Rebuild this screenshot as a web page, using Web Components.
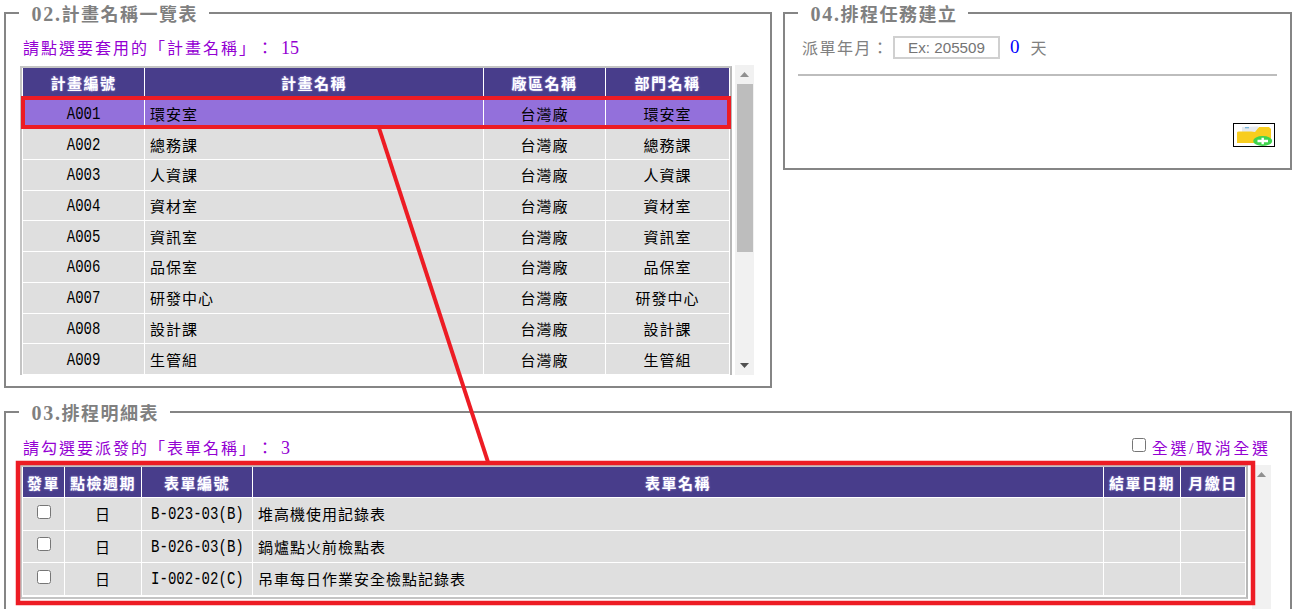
<!DOCTYPE html>
<html lang="zh-Hant">
<head>
<meta charset="utf-8">
<title>排程任務</title>
<style>
  html, body { margin: 0; height: 100%; overflow: hidden; background: #fff; }
</style>
</head>
<body>
<fx-app></fx-app>

<script>
const FONT_STACK = `"Liberation Serif", "Noto Sans CJK TC", serif`;

const PLAN_COLUMNS = [
  { title: "計畫編號", width: 121, align: "center" },
  { title: "計畫名稱", width: 338, align: "left" },
  { title: "廠區名稱", width: 121, align: "center" },
  { title: "部門名稱", width: 123, align: "center" }
];

const PLAN_ROWS = [
  ["A001", "環安室", "台灣廠", "環安室"],
  ["A002", "總務課", "台灣廠", "總務課"],
  ["A003", "人資課", "台灣廠", "人資課"],
  ["A004", "資材室", "台灣廠", "資材室"],
  ["A005", "資訊室", "台灣廠", "資訊室"],
  ["A006", "品保室", "台灣廠", "品保室"],
  ["A007", "研發中心", "台灣廠", "研發中心"],
  ["A008", "設計課", "台灣廠", "設計課"],
  ["A009", "生管組", "台灣廠", "生管組"]
];

const FORM_COLUMNS = [
  { title: "發單", width: 41, align: "center", check: true },
  { title: "點檢週期", width: 76, align: "center" },
  { title: "表單編號", width: 110, align: "center" },
  { title: "表單名稱", width: 850, align: "left" },
  { title: "結單日期", width: 76, align: "center" },
  { title: "月繳日", width: 64, align: "center" }
];

const FORM_ROWS = [
  ["", "日", "B-023-03(B)", "堆高機使用記錄表", "", ""],
  ["", "日", "B-026-03(B)", "鍋爐點火前檢點表", "", ""],
  ["", "日", "I-002-02(C)", "吊車每日作業安全檢點記錄表", "", ""]
];

class FxPanel extends HTMLElement {
  constructor() {
    super();
    this.attachShadow({ mode: "open" });
  }

  connectedCallback() {
    const num = this.getAttribute("num");
    const title = this.getAttribute("title");
    this.removeAttribute("title");
    this.shadowRoot.innerHTML = /* html */`
    <style>
      :host { display: block; font-family: ${FONT_STACK}; }
      fieldset {
        box-sizing: border-box;
        height: 100%;
        margin: 0;
        padding: 0;
        min-width: 0;
        border: 2px solid #858585;
      }
      legend {
        margin-left: 13px;
        padding: 0 10.5px 0 12.5px;
        height: 22px;
        line-height: 24px;
        font-size: 18px;
        font-weight: bold;
        letter-spacing: 1.5px;
        color: #808080;
      }
      .num { font-size: 20px; letter-spacing: 1.7px; }
    </style>
    <fieldset>
      <legend><span class="num">${num}.</span>${title}</legend>
      <slot></slot>
    </fieldset>`;
  }
}

class FxScrollbar extends HTMLElement {
  constructor() {
    super();
    this.attachShadow({ mode: "open" });
  }

  connectedCallback() {
    const thumb = this.hasAttribute("thumb");
    const down = this.hasAttribute("down");
    this.shadowRoot.innerHTML = /* html */`
    <style>
      :host {
        display: flex;
        flex-direction: column;
        align-items: center;
        flex: none;
        width: 19px;
        height: 100%;
        background: #f1f1f1;
      }
      .arrow { flex: none; height: 19px; width: 100%; display: flex; align-items: center; justify-content: center; }
      .thumb { width: 16px; height: 168px; background: #bdbdbd; }
      .space { flex: 1; }
      svg { display: block; }
    </style>
    <div class="arrow"><svg width="9" height="5" viewBox="0 0 9 5"><path d="M4.5 0 9 5H0z" fill="#8f8f8f"/></svg></div>
    ${thumb ? `<div class="thumb"></div>` : ""}
    <div class="space"></div>
    ${down ? `<div class="arrow"><svg width="9" height="5" viewBox="0 0 9 5"><path d="M0 0h9L4.500 5z" fill="#505050"/></svg></div>` : ""}`;
  }
}

class FxGrid extends HTMLElement {
  constructor() {
    super();
    this.attachShadow({ mode: "open" });
  }

  set data({ columns, rows, selected = -1, rowHeight, headHeight }) {
    const widths = columns.map(col => `${col.width}px`).join(" ");
    const head = columns.map(col => `<div class="th">${col.title}</div>`).join("");
    const body = rows.map((row, r) => row.map((value, c) => {
      const col = columns[c];
      let inner = value;
      if (col.check) inner = `<input type="checkbox">`;
      else if (/^[\x21-\x7e]+$/.test(value)) inner = `<span class="code">${value}</span>`;
      return `<div class="td ${col.align} ${r === selected ? "sel" : ""}">${inner}</div>`;
    }).join("")).join("");

    this.shadowRoot.innerHTML = /* html */`
    <style>
      :host {
        display: block;
        box-sizing: border-box;
        flex: none;
        overflow: hidden;
        font-family: ${FONT_STACK};
        font-size: 15px;
        letter-spacing: 1px;
        color: #000;
      }
      .table {
        display: grid;
        grid-template-columns: ${widths};
        grid-template-rows: ${headHeight}px;
        grid-auto-rows: ${rowHeight}px;
        gap: 1px;
        padding: 0 1px 2px;
        width: max-content;
        border: 2px solid #c4c4c4;
        border-right-color: #b8b8b8;
        background: #fff;
      }
      .th {
        display: flex;
        align-items: center;
        justify-content: center;
        background: #483d8b;
        color: #fff;
        font-weight: bold;
        letter-spacing: 1.5px;
        text-shadow: 0 0 2px #a79fe6;
      }
      .td {
        display: flex;
        align-items: center;
        background: #dfdfdf;
        white-space: nowrap;
      }
      .td.sel { background: #9370db; }
      .td.center { justify-content: center; }
      .td.left { padding-left: 5px; }
      /* half width latin, the source font is a narrow mono one */
      .code {
        flex: none;
        padding-top: 1px;
        font-family: "Liberation Mono", monospace;
        font-size: 18px;
        letter-spacing: 0;
        transform: scaleX(.78);
      }
      input { width: 14px; height: 14px; margin: 0 0 4px; }
    </style>
    <div class="table">${head}${body}</div>`;
  }
}

class FxPlanList extends HTMLElement {
  constructor() {
    super();
    this.attachShadow({ mode: "open" });
  }

  connectedCallback() {
    this.shadowRoot.innerHTML = /* html */`
    <style>
      :host { display: block; padding: 12px 0 0 14px; }
      .prompt {
        height: 24px;
        line-height: 24px;
        margin: 0 0 5px 3px;
        font-size: 16px;
        letter-spacing: 2px;
        color: #9400d3;
      }
      .count { font-size: 18px; letter-spacing: 0; }
      .scroller { display: flex; gap: 3px; height: 310px; }
      fx-grid { margin-top: 1px; height: 309px; }
    </style>
    <div class="prompt">請點選要套用的「計畫名稱」： <span class="count">15</span></div>
    <div class="scroller">
      <fx-grid></fx-grid>
      <fx-scrollbar thumb down></fx-scrollbar>
    </div>`;
    this.shadowRoot.querySelector("fx-grid").data = {
      columns: PLAN_COLUMNS,
      rows: PLAN_ROWS,
      selected: 0,
      headHeight: 29.7,
      rowHeight: 29.7
    };
  }
}

class FxTaskForm extends HTMLElement {
  constructor() {
    super();
    this.attachShadow({ mode: "open" });
  }

  connectedCallback() {
    this.shadowRoot.innerHTML = /* html */`
    <style>
      :host { display: block; padding: 11px 13px 0; }
      .line {
        display: flex;
        align-items: center;
        height: 24px;
        padding-left: 4px;
        font-size: 16px;
        letter-spacing: 1.5px;
        color: #808080;
      }
      input {
        box-sizing: border-box;
        width: 107px;
        height: 23px;
        margin: 0 10px 0 3.5px;
        padding: 0;
        border: 2px solid #d0d0d0;
        font: 15.2px "Liberation Sans", sans-serif;
        text-align: center;
        outline: 0;
      }
      .days { color: #0000ff; font-size: 19px; letter-spacing: 0; margin-right: 11px; }
      hr { height: 2px; margin: 15px 0 0; border: 0; background: #bdbdbd; }
      .actions { display: flex; justify-content: flex-end; padding: 47px 2px 0 0; }
      button {
        display: block;
        box-sizing: border-box;
        width: 42px;
        height: 24px;
        padding: 0;
        border: 1px solid #000;
        background: #fff;
      }
      svg { display: block; }
    </style>
    <div class="line">派單年月：<input placeholder="Ex: 205509"><span class="days">0</span>天</div>
    <hr>
    <div class="actions">
      <button aria-label="新增">
        <svg width="40" height="22" viewBox="0 0 40 22">
          <path d="M8 3 24 2.500V10H8z" fill="#e6eaee"/>
          <path d="M11 3.700h4" stroke="#6fb3dc" stroke-width="1.200"/>
          <path d="M3 19V8.500Q3 7.500 5 7.500H17L21 8 25 3H35L37 5V19z" fill="#f8cd1e"/>
          <ellipse cx="28.700" cy="17" rx="9.500" ry="5" fill="#3fd44d"/>
          <path d="M23.500 17h10.500M28.700 13.700v6.600" stroke="#fff" stroke-width="2.400"/>
        </svg>
      </button>
    </div>`;
  }
}

class FxFormList extends HTMLElement {
  constructor() {
    super();
    this.attachShadow({ mode: "open" });
  }

  connectedCallback() {
    this.shadowRoot.innerHTML = /* html */`
    <style>
      :host { display: block; padding: 12px 0 0 14px; }
      .top {
        display: flex;
        justify-content: space-between;
        align-items: center;
        height: 24px;
        margin: 0 19.5px 6px 3px;
        font-size: 16px;
        letter-spacing: 2px;
        color: #9400d3;
      }
      .count { font-size: 18px; letter-spacing: 0; }
      label { display: flex; align-items: center; gap: 6px; letter-spacing: 2.6px; }
      label input { width: 14px; height: 14px; margin: 0 0 4px; }
      .scroller { display: flex; gap: 4px; height: 160px; }
    </style>
    <div class="top">
      <span>請勾選要派發的「表單名稱」： <span class="count">3</span></span>
      <label><input type="checkbox">全選/取消全選</label>
    </div>
    <div class="scroller">
      <fx-grid></fx-grid>
      <fx-scrollbar></fx-scrollbar>
    </div>`;
    this.shadowRoot.querySelector("fx-grid").data = {
      columns: FORM_COLUMNS,
      rows: FORM_ROWS,
      headHeight: 30,
      rowHeight: 31.6
    };
  }
}

// red callouts drawn over the screen
class FxAnnotations extends HTMLElement {
  constructor() {
    super();
    this.attachShadow({ mode: "open" });
  }

  connectedCallback() {
    this.shadowRoot.innerHTML = /* html */`
    <style>
      :host { position: absolute; inset: 0; pointer-events: none; }
      svg { display: block; }
    </style>
    <svg width="1300" height="609" viewBox="0 0 1300 609" fill="none" stroke="#ed1c24" stroke-width="4">
      <rect x="23" y="98" width="706" height="29"/>
      <rect x="18" y="463" width="1235" height="140" stroke-width="4.500"/>
      <path d="M379 128 488 462"/>
    </svg>`;
  }
}

class FxApp extends HTMLElement {
  constructor() {
    super();
    this.attachShadow({ mode: "open" });
  }

  connectedCallback() {
    this.shadowRoot.innerHTML = /* html */`
    <style>
      :host {
        display: grid;
        grid-template-columns: 768px 509px;
        grid-template-rows: 386px 240px;
        column-gap: 11px;
        row-gap: 13px;
        padding: 2px 0 0 4px;
        position: relative;
        height: 609px;
        box-sizing: border-box;
        overflow: hidden;
        font-family: ${FONT_STACK};
        text-spacing-trim: space-all;
      }
      .task { height: 168px; }
      .forms { grid-column: 1 / -1; }
    </style>
    <fx-panel num="02" title="計畫名稱一覽表"><fx-plan-list></fx-plan-list></fx-panel>
    <fx-panel class="task" num="04" title="排程任務建立"><fx-task-form></fx-task-form></fx-panel>
    <fx-panel class="forms" num="03" title="排程明細表"><fx-form-list></fx-form-list></fx-panel>
    <fx-annotations></fx-annotations>`;
  }
}

customElements.define("fx-panel", FxPanel);
customElements.define("fx-scrollbar", FxScrollbar);
customElements.define("fx-grid", FxGrid);
customElements.define("fx-plan-list", FxPlanList);
customElements.define("fx-task-form", FxTaskForm);
customElements.define("fx-form-list", FxFormList);
customElements.define("fx-annotations", FxAnnotations);
customElements.define("fx-app", FxApp);
</script>
</body>
</html>
